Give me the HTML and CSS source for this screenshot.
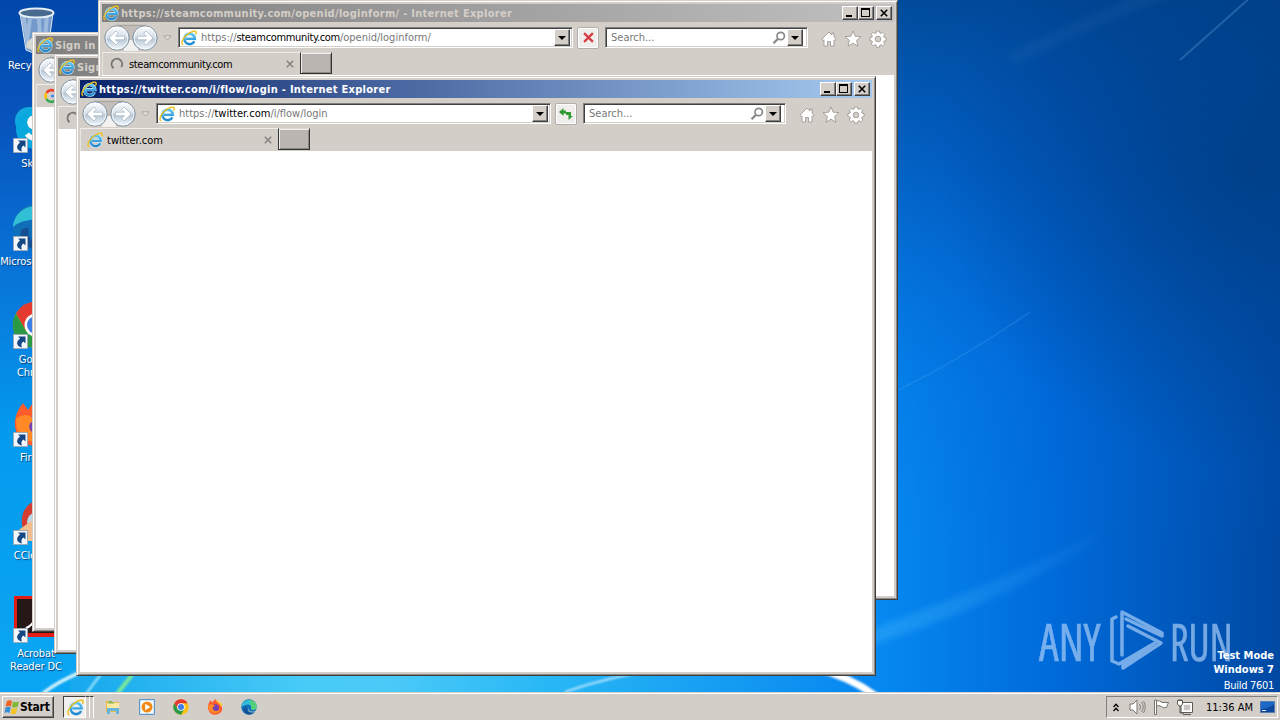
FILE: index.html
```html
<!DOCTYPE html>
<html lang="en">
<head>
  <meta charset="UTF-8">
  <title>Desktop</title>
  <link rel="stylesheet" href="styles.css">
</head>
<body>
  <svg class="sprites" width="0" height="0">
    <defs>
      <linearGradient id="glass" x1="0" y1="0" x2="0" y2="1">
        <stop offset="0" stop-color="#fff"/><stop offset=".45" stop-color="#d6dfe8"/><stop offset=".55" stop-color="#b9c8d6"/><stop offset="1" stop-color="#f4fbff"/>
      </linearGradient>
      <linearGradient id="ieBlue" x1="0" y1="0" x2="0" y2="1">
        <stop offset="0" stop-color="#5cc3f2"/><stop offset="1" stop-color="#1f86cf"/>
      </linearGradient>
    </defs>
    <symbol id="ie" viewBox="0 0 16 16">
      <path d="M13.400 11.200A5.300 5.300 0 1 1 13.900 8.700H4.500" fill="none" stroke="#d3effc" stroke-width="3.200"/>
      <path d="M13.300 11.200A5.200 5.200 0 1 1 13.800 8.800H5" fill="none" stroke="url(#ieBlue)" stroke-width="2.300"/>
      <path d="M2.200 14.800C-.8 13.800 1.800 8 6.200 4.500 10.600 1 15.200 0 15.200 2.400c0 .8-.3 1.500-.7 2.200" fill="none" stroke="#edc021" stroke-width="1.400"/>
    </symbol>
    <symbol id="nav" viewBox="0 0 56 28">
      <path d="M13 1.500H43" stroke="#aaa5a0" stroke-width="1.500"/>
      <path d="M13 2H43V26H13Z" fill="#c3beb9"/>
      <path d="M21 20Q28 12 35 20V27H21Z" fill="#f3f1ef"/>
      <circle cx="14" cy="14" r="12.200" fill="url(#glass)" stroke="#8294a5"/>
      <circle cx="42" cy="14" r="12.200" fill="url(#glass)" stroke="#8294a5"/>
      <circle cx="14" cy="14" r="10.800" fill="none" stroke="#fff" stroke-opacity=".7"/>
      <circle cx="42" cy="14" r="10.800" fill="none" stroke="#fff" stroke-opacity=".7"/>
      <path d="M6 14l7-7 2.300 2.300-2.800 2.900H21.500v3.600h-9l2.800 2.900L13 21z" fill="#fff" stroke="#a3b3c2" stroke-width=".7"/>
      <path d="M50 14l-7-7-2.300 2.300 2.800 2.900H34.500v3.600h9l-2.800 2.900L43 21z" fill="#fff" stroke="#a3b3c2" stroke-width=".7"/>
    </symbol>
    <symbol id="menu-arrow" viewBox="0 0 9 6"><path d="M.8.8h7.400L4.500 5z" fill="#e5e1dc" stroke="#aaa6a1"/></symbol>
    <symbol id="down" viewBox="0 0 8 4"><path d="M0 0h8L4 4z"/></symbol>
    <symbol id="lens" viewBox="0 0 14 14"><circle cx="8.700" cy="5" r="3.700" fill="none" stroke="#888" stroke-width="1.700"/><path d="M6 7.700L1.500 12.200" stroke="#888" stroke-width="2.300"/></symbol>
    <symbol id="home" viewBox="0 0 16 16"><path d="M8 1L.8 8.200l1.400 1.300.8-.6V15h3.500v-4.500h3V15H13V8.900l.8.600 1.400-1.300L13 6V2h-2v2z" fill="#fff" stroke="#9e9994" stroke-width=".9"/></symbol>
    <symbol id="star" viewBox="0 0 18 18"><path d="M9 .9l2.200 5.300 5.800.4-4.400 3.800 1.400 5.900L9 13.100l-5 3.200 1.400-5.900L1 6.600l5.800-.4z" fill="#fff" stroke="#9e9994" stroke-width=".9"/></symbol>
    <symbol id="gear" viewBox="0 0 18 18">
      <g fill="#fff" stroke="#9e9994" stroke-width=".9"><path d="M7.500 1h3l.4 2 1.200.5 1.700-1.200 2 2-1.200 1.700.5 1.200 2 .4v3l-2 .4-.5 1.200 1.200 1.700-2 2-1.700-1.200-1.200.5-.4 2h-3l-.4-2-1.200-.5-1.700 1.200-2-2 1.200-1.700-.5-1.200-2-.4v-3l2-.4.5-1.200-1.200-1.700 2-2 1.700 1.200 1.200-.5z"/><circle cx="9" cy="9" r="2.800" fill="#d4cec8"/></g>
    </symbol>
    <symbol id="x" viewBox="0 0 8 8"><path d="M.8.8l6.400 6.400M7.200.8L.8 7.200" stroke="currentColor" stroke-width="1.600"/></symbol>
    <symbol id="spin" viewBox="0 0 14 14"><path d="M3.500 11.200A5.300 5.300 0 1 1 11.300 10" fill="none" stroke="#777" stroke-width="2"/></symbol>
    <symbol id="shortcut" viewBox="0 0 15 15"><path d="M.5.5h14v14H.5z" fill="#f3f7fb" stroke="#9cabb9"/><path d="M5 2.500H12.500V9.500L10.500 7.500C8 9 8 11 9 13.500 4 12.500 2 8.500 7 4.600z" fill="#164785"/></symbol>
    <symbol id="chrome" viewBox="0 0 48 48"><circle cx="24" cy="24" r="23" fill="#fbc116"/><path d="M4 12.500A23 23 0 0 1 44 12.500H24L14 30z" fill="#e53a2f"/><path d="M4 12.500A23 23 0 0 0 24 47L34 30 14 30z" fill="#2a9a45"/><circle cx="24" cy="24" r="11.500" fill="#fff"/><circle cx="24" cy="24" r="9" fill="#3e7de8"/></symbol>
    <symbol id="edge" viewBox="0 0 48 48"><circle cx="24" cy="24" r="23" fill="#0f6fb9"/><path d="M1 24C2 5 25-4 40 9c8 7 10 20 1 23-6 2-13 0-11-4 3-7-4-12-12-11C10 18 4 21 1 24z" fill="#31bfd6"/><path d="M29 3c16 3 23 20 15 27-5 4-15 2-14-2 2-10-5-14-3-25z" fill="#54d079"/><path d="M17 25c-3 11 7 20 23 15-9 10-25 8-31-4-2-8 1-12 8-11z" fill="#174f94"/><path d="M24 28c-4 6 5 14 20 7 4-2-1 5-4 5-17 4-23-9-16-12z" fill="#d4cec8" fill-opacity=".75"/></symbol>
    <symbol id="firefox" viewBox="0 0 48 48"><path d="M4 17C6 10 9 7 11 4l5 7c3-6 7-8 11-10 1 7 8 9 13 14 13 15 2 32-15 32C10 48-1 32 4 17z" fill="#ff5b2d"/><path d="M27 2c0 10 14 10 15 23l4-8C44 9 33 8 27 2z" fill="#ffca35"/><circle cx="25" cy="27" r="11" fill="#7541b3"/><path d="M4 20c9-8 17-2 20 2-6 0-9 5-5 10 6 7 17 4 20-4 2 17-26 22-34 2-1-4-1-7-1-10z" fill="#ff8925"/></symbol>
  </svg>

  <div class="desktop">
    <svg class="wallpaper" viewBox="0 0 1280 692" preserveAspectRatio="none">
      <defs>
        <linearGradient id="base" x1="0" y1="0" x2="1" y2="0">
          <stop offset="0" stop-color="#0a9cf2"/><stop offset=".69" stop-color="#0688f0"/><stop offset=".82" stop-color="#006bdb"/><stop offset="1" stop-color="#0049a3"/>
        </linearGradient>
        <linearGradient id="topShade" x1="0" y1="0" x2="0" y2="1">
          <stop offset="0" stop-color="#00418c" stop-opacity=".85"/><stop offset=".25" stop-color="#0049a8" stop-opacity=".58"/><stop offset=".56" stop-color="#0059c8" stop-opacity=".14"/><stop offset=".8" stop-color="#006bd8" stop-opacity="0"/>
        </linearGradient>
        <linearGradient id="leftShade" x1="0" y1="0" x2="0" y2="1">
          <stop offset="0" stop-color="#0048aa"/><stop offset=".18" stop-color="#0755bd"/><stop offset=".4" stop-color="#0875d9"/><stop offset=".63" stop-color="#039bee"/><stop offset="1" stop-color="#0ba6f3"/>
        </linearGradient>
        <radialGradient id="corner"><stop offset="0" stop-color="#003c7c" stop-opacity=".7"/><stop offset="1" stop-color="#003c7c" stop-opacity="0"/></radialGradient>
        <linearGradient id="glow" x1="0" y1="0" x2="1" y2="0"><stop offset="0" stop-color="#16a8ed"/><stop offset=".3" stop-color="#48cbf7"/><stop offset=".4" stop-color="#4bcaf8"/><stop offset=".6" stop-color="#29b8f5"/><stop offset="1" stop-color="#0688f0"/></linearGradient>
        <linearGradient id="ray" x1="0" y1="0" x2="1" y2="0"><stop offset="0" stop-color="#4bbcff" stop-opacity=".35"/><stop offset="1" stop-color="#4bbcff" stop-opacity="0"/></linearGradient>
        <filter id="soft"><feGaussianBlur stdDeviation="1.200"/></filter>
        <filter id="softer"><feGaussianBlur stdDeviation="3"/></filter>
      </defs>
      <rect width="1280" height="692" fill="url(#base)"/>
      <rect width="1280" height="692" fill="url(#topShade)"/>
      <ellipse cx="1250" cy="170" rx="310" ry="300" fill="url(#corner)"/>
      <rect width="120" height="692" fill="url(#leftShade)"/>
      <rect x="70" y="670" width="790" height="22" fill="url(#glow)"/>
      <path d="M870 645Q1030 595 1130 515Q1020 575 870 630z" fill="url(#ray)" filter="url(#softer)"/>
      <path d="M898 390Q960 360 1030 312" fill="none" stroke="#4ba7f1" stroke-opacity=".28" stroke-width="1.500"/>
      <path d="M1180 60L1252 -4" stroke="#5794cb" stroke-opacity=".4" stroke-width="2"/>
      <path d="M1010 60Q1080 25 1170-10" fill="none" stroke="#4f91cc" stroke-opacity=".09" stroke-width="14" filter="url(#softer)"/>
      <g filter="url(#soft)" fill="none">
        <path d="M42 694Q60 680 84 671" stroke="#e5faff" stroke-width="3"/>
        <path d="M86 694L101 674" stroke="#b5eeff" stroke-width="2"/>
        <path d="M117 694L132 675" stroke="#7deb98" stroke-width="4"/>
        <path d="M565 692Q610 676 660 670" stroke="#b5e6ff" stroke-width="2"/>
        <path d="M815 668Q850 677 876 696" stroke="#fff" stroke-width="7"/>
      </g>
    </svg>

    <div class="icons">
      <div class="shortcut">
        <svg class="picture" viewBox="0 0 48 48"><path d="M8 6h33l-5 37q-11 6-22 0z" fill="#b1c5da" fill-opacity=".65" stroke="#dce8f1"/><path d="M11 8l6 34M35 8l-3 35M18 12l-3 22M27 12l1 20" stroke="#eef5fc" stroke-opacity=".35" stroke-width="4"/><ellipse cx="24.500" cy="6" rx="17" ry="4.500" fill="#476a8e" stroke="#e6eff7" stroke-width="2"/><path d="M15 35l6-5 6 3 6-2v10l-12 3-7-4z" fill="#d8d9d2"/></svg>
        <span>Recycle Bin</span>
      </div>
      <div class="shortcut">
        <svg class="picture" viewBox="0 0 48 48"><circle cx="17" cy="16" r="14" fill="#13a9de"/><circle cx="24" cy="24" r="20" fill="#09a9df"/><path d="M31 15c-7-5-15-2-13 4 1 5 13 3 13 9 0 7-12 7-16 1" fill="none" stroke="#fff" stroke-width="5"/></svg>
        <svg class="badge"><use href="#shortcut"/></svg><span>Skype</span>
      </div>
      <div class="shortcut">
        <svg class="picture"><use href="#edge"/></svg><svg class="badge"><use href="#shortcut"/></svg><span>Microsoft Edge</span>
      </div>
      <div class="shortcut">
        <svg class="picture"><use href="#chrome"/></svg><svg class="badge"><use href="#shortcut"/></svg><span>Google<br>Chrome</span>
      </div>
      <div class="shortcut">
        <svg class="picture"><use href="#firefox"/></svg><svg class="badge"><use href="#shortcut"/></svg><span>Firefox</span>
      </div>
      <div class="shortcut">
        <svg class="picture" viewBox="0 0 48 48"><path d="M10 27A18 20 0 0 1 39 8v31H12z" fill="#d43c31"/><circle cx="25" cy="25" r="10" fill="#b9d8e8"/><path d="M4 35l15-11 8 8-2 12H7z" fill="#f1bd8d"/></svg>
        <svg class="badge"><use href="#shortcut"/></svg><span>CCleaner</span>
      </div>
      <div class="shortcut">
        <svg class="picture" viewBox="0 0 48 48"><path d="M2 1h44v41H2z" fill="#e51c14"/><path d="M5 4h38v34H5z" fill="#251817"/><path d="M14 33c9-3 13-17 10-20s-4 4 1 11 12 5 11 3-12-1-22 6z" fill="none" stroke="#fff" stroke-width="2"/></svg>
        <svg class="badge"><use href="#shortcut"/></svg><span>Acrobat<br>Reader DC</span>
      </div>
    </div>

    <div class="anyrun">
      <b>ANY</b>
      <svg viewBox="0 0 56 64"><g fill="none" stroke="currentColor" stroke-width="3.500" stroke-linejoin="round" stroke-linecap="round"><path d="M7 8L3 10V52L10 55 46 34"/><path d="M13 46V3L53 24V27L17 10"/><path d="M19 17L52 34 14 59V55L41 37"/></g></svg>
      <b class="run">RUN</b>
    </div>
    <div class="build"><b>Test Mode</b><b>Windows 7</b><span>Build 7601</span></div>

    <div class="window win-google">
      <div class="title"><svg class="ie"><use href="#ie"/></svg><span>Sign in - Google</span></div>
      <div class="toolbar"><svg class="nav"><use href="#nav"/></svg></div>
      <div class="tabs"><div class="tab"><svg class="tab-icon" viewBox="0 0 16 16"><g fill="none" stroke-width="2.600"><path d="M12.500 4A5.500 5.500 0 0 0 3.500 5" stroke="#ea4335"/><path d="M3.500 5a5.500 5.500 0 0 0 0 6" stroke="#fbbc05"/><path d="M3.500 11a5.500 5.500 0 0 0 8.500 1.500" stroke="#34a853"/><path d="M12 12.500A5 5 0 0 0 13.500 8H8" stroke="#4285f4"/></g></svg></div></div>
      <div class="page"></div>
    </div>

    <div class="window win-sign">
      <div class="title"><svg class="ie"><use href="#ie"/></svg><span>Sign in</span></div>
      <div class="toolbar"><svg class="nav"><use href="#nav"/></svg></div>
      <div class="tabs"><div class="tab"><svg class="tab-icon spin"><use href="#spin"/></svg></div></div>
      <div class="page"></div>
    </div>

    <div class="window win-steam">
      <div class="title">
        <svg class="ie"><use href="#ie"/></svg><span>https://steamcommunity.com/openid/loginform/ - Internet Explorer</span>
        <div class="controls"><i class="min"></i><i class="max"></i><i class="close"><svg><use href="#x"/></svg></i></div>
      </div>
      <div class="toolbar">
        <svg class="nav"><use href="#nav"/></svg><svg class="history"><use href="#menu-arrow"/></svg>
        <div class="field address"><svg class="ie"><use href="#ie"/></svg><span>https://<em>steamcommunity.com</em>/openid/loginform/</span><i class="drop"><svg><use href="#down"/></svg></i></div>
        <div class="reload stop"><svg><use href="#x"/></svg></div>
        <div class="field search"><span>Search...</span><svg class="lens"><use href="#lens"/></svg><i class="drop"><svg><use href="#down"/></svg></i></div>
        <div class="tools"><svg><use href="#home"/></svg><svg><use href="#star"/></svg><svg><use href="#gear"/></svg></div>
      </div>
      <div class="tabs"><div class="tab"><svg class="tab-icon spin"><use href="#spin"/></svg><span>steamcommunity.com</span><svg class="tab-close"><use href="#x"/></svg></div><div class="new-tab"></div></div>
      <div class="page"></div>
    </div>

    <div class="window win-twitter active">
      <div class="title">
        <svg class="ie"><use href="#ie"/></svg><span>https://twitter.com/i/flow/login - Internet Explorer</span>
        <div class="controls"><i class="min"></i><i class="max"></i><i class="close"><svg><use href="#x"/></svg></i></div>
      </div>
      <div class="toolbar">
        <svg class="nav"><use href="#nav"/></svg><svg class="history"><use href="#menu-arrow"/></svg>
        <div class="field address"><svg class="ie"><use href="#ie"/></svg><span>https://<em>twitter.com</em>/i/flow/login</span><i class="drop"><svg><use href="#down"/></svg></i></div>
        <div class="reload"><svg viewBox="0 0 14 12"><path d="M4.500 0L0 4l4.500 4V5.500H7v-3H4.500zM9.500 12L14 8H12V4H7v3h2.500z" fill="#2e9b32"/></svg></div>
        <div class="field search"><span>Search...</span><svg class="lens"><use href="#lens"/></svg><i class="drop"><svg><use href="#down"/></svg></i></div>
        <div class="tools"><svg><use href="#home"/></svg><svg><use href="#star"/></svg><svg><use href="#gear"/></svg></div>
      </div>
      <div class="tabs"><div class="tab"><svg class="tab-icon"><use href="#ie"/></svg><span>twitter.com</span><svg class="tab-close"><use href="#x"/></svg></div><div class="new-tab"></div></div>
      <div class="page"></div>
    </div>
  </div>

  <div class="taskbar">
    <div class="start">
      <svg viewBox="0 0 16 16"><path d="M3 2q3-1.500 5 0L7 7.500q-2-1-5.500 0z" fill="#ee6425"/><path d="M9 2.500q3 1.500 6 0L13.500 8q-3 1-5.500 0z" fill="#80b735"/><path d="M1.500 8.500q3-1.500 5.300 0L5.500 14q-2.500-1.500-5 0z" fill="#3790d7"/><path d="M7.800 9q2.500 1.200 5.500 0L12 14.500q-2.500 1.500-5.500 0z" fill="#f3c326"/></svg>
      <b>Start</b>
    </div>
    <div class="running"><div><svg><use href="#ie"/></svg></div><i></i><i></i></div>
    <div class="pinned">
      <svg viewBox="0 0 16 16"><path d="M1 2h5l1 1h7v10H1z" fill="#e9bd4b"/><path d="M2 4h12v6H2z" fill="#fbe9a2"/><path d="M3 4h6M4 2.500h3" stroke="#6db45a"/><path d="M2 9h12v6h-3v-3H5v3H2z" fill="#65b5dd"/></svg>
      <svg viewBox="0 0 16 16"><path d="M.5.500h15v15H.5z" fill="#cce4f6" stroke="#5e98c6"/><path d="M2 2h12v12H2z" fill="#fff"/><circle cx="8" cy="8" r="5.500" fill="#f28a16"/><path d="M6.200 4.800v6.400L11.300 8z" fill="#fff"/></svg>
      <svg><use href="#chrome"/></svg>
      <svg><use href="#firefox"/></svg>
      <svg><use href="#edge"/></svg>
    </div>
    <div class="tray">
      <svg class="more" viewBox="0 0 6 9"><path d="M.5 4L3 1.300 5.500 4M.5 8L3 5.300 5.500 8" fill="none" stroke="#000" stroke-width="1.300"/></svg>
      <svg class="volume" viewBox="0 0 17 16"><path d="M1 5h3l4-4v14l-4-4H1z" fill="#fff" stroke="#77736f"/><path d="M10.500 5q2 3 0 6M12.500 3q3.500 5 0 10M14.500 2q3.500 6 0 12" fill="none" stroke="#84807b"/></svg>
      <svg class="flag" viewBox="0 0 17 16"><path d="M1.500 1h2v14.500h-2z" fill="#fff" stroke="#77736f"/><path d="M3.500 2Q7 1 9 3.500h6.500l-2 5q-3 1-5-1-2-1.500-5-.5z" fill="#fff" stroke="#77736f"/></svg>
      <svg class="net" viewBox="0 0 16 16"><path d="M5.500 4.500h9v8h-9z" fill="#c9c5c1" stroke="#fff" stroke-width="2.500"/><path d="M4 3.500h11.500v10H4zM6 15.500h8M3 7v7h4" fill="none" stroke="#5c5955"/><path d="M.5 1.500h5V5L4 7H2L.5 5z" fill="#fff" stroke="#5c5955"/><path d="M2 0v2M4 0v2" stroke="#5c5955"/></svg>
      <span>11:36 AM</span>
      <svg class="show" viewBox="0 0 15 13"><path d="M.5.500h14v11H.5z" fill="#1b68c9" stroke="#557eae"/><path d="M1 8Q8 8 14 3v8H1z" fill="#0b489d"/><path d="M2 9.500h4" stroke="#eee"/></svg>
    </div>
  </div>
</body>
</html>
```
FILE: styles.css
```css
* {
  box-sizing: border-box;
}
body {
  margin: 0;
  width: 1280px;
  height: 720px;
  overflow: hidden;
  display: flex;
  flex-direction: column;
  font-family: "DejaVu Sans Condensed", "DejaVu Sans", sans-serif;
  font-size: 11px;
  line-height: 13px;
  white-space: nowrap;
}
svg {
  display: block;
  flex: none;
}
.sprites {
  position: absolute;
}
.desktop {
  position: relative;
  height: 692px;
  overflow: hidden;
}
.wallpaper {
  position: absolute;
  width: 1280px;
  height: 692px;
}

/* desktop shortcuts */
.icons {
  position: absolute;
  top: 7px;
  left: -2px;
  width: 76px;
}
.shortcut {
  position: relative;
  height: 98px;
  display: flex;
  flex-direction: column;
  align-items: center;
  gap: 4px;
  color: white;
  text-align: center;
  text-shadow: 1px 1px 1px #063a76;
  letter-spacing: -0.1px;
}
.picture {
  width: 48px;
  height: 48px;
}
.badge {
  position: absolute;
  left: 15px;
  top: 33px;
  width: 15px;
  height: 15px;
}

/* windows */
.window {
  position: absolute;
  width: 800px;
  height: 600px;
  padding: 3px;
  background: #d4cec8;
  border: 1px solid #d4cec8;
  border-right-color: #404040;
  border-bottom-color: #404040;
  box-shadow: inset 1px 1px #fff, inset -1px -1px #8b8782;
}
.win-google { left: 32px; top: 32px; }
.win-sign { left: 54px; top: 54px; }
.win-steam { left: 98px; top: 0; }
.win-twitter { left: 76px; top: 76px; }
.title {
  height: 18px;
  display: flex;
  align-items: center;
  padding: 0 2px 0 1px;
  gap: 2px;
  color: #d4cec8;
  background: linear-gradient(90deg, #808080, #c0c0c0);
  font-weight: bold;
  letter-spacing: 0.29px;
}
.active .title {
  color: white;
  background: linear-gradient(90deg, #0a246a, #a6caf0);
}
.ie {
  width: 16px;
  height: 16px;
}
.controls {
  display: flex;
  margin-left: auto;
}
.controls i {
  width: 16px;
  height: 14px;
  background: #d4cec8;
  border: 1px solid #fff;
  border-right-color: #404040;
  border-bottom-color: #404040;
  box-shadow: inset -1px -1px #808080;
  color: #000;
}
.min::after {
  content: "";
  display: block;
  width: 6px;
  height: 2px;
  margin: 8px 0 0 3px;
  background: #000;
}
.max::after {
  content: "";
  display: block;
  width: 7px;
  height: 6px;
  margin: 1px 0 0 2px;
  border: 1px solid #000;
  border-top-width: 2px;
}
.controls .close {
  margin-left: 2px;
}
.close svg {
  width: 8px;
  height: 8px;
  margin: 2px 0 0 3px;
}
.toolbar {
  height: 30px;
  display: flex;
  align-items: center;
  padding: 1px 0 0 1px;
}
.nav {
  width: 56px;
  height: 28px;
}
.history {
  width: 9px;
  height: 6px;
  margin: 0 6px 0 4px;
}
.field {
  height: 21px;
  display: flex;
  align-items: center;
  background: #fff;
  border: 1px solid #808080;
  border-right-color: #fff;
  border-bottom-color: #fff;
  box-shadow: inset 1px 1px #404040, inset -1px -1px #d4cec8;
  color: #777;
}
.field em {
  color: #000;
  font-style: normal;
}
.win-steam em,
.win-steam .tab span {
  letter-spacing: -0.33px;
}
.address {
  width: 395px;
  padding: 0 2px;
  gap: 4px;
}
.drop {
  width: 16px;
  height: 17px;
  margin-left: auto;
  display: flex;
  align-items: center;
  justify-content: center;
  background: #d4cec8;
  border: 1px solid #fff;
  border-right-color: #404040;
  border-bottom-color: #404040;
  box-shadow: inset -1px -1px #808080;
}
.drop svg {
  width: 8px;
  height: 4px;
}
.reload {
  width: 22px;
  height: 22px;
  margin: 0 6px 0 4px;
  display: flex;
  align-items: center;
  justify-content: center;
  background: #f0eeec;
  border: 1px solid #b4afab;
  border-radius: 2px;
  box-shadow: inset 0 0 0 1px #fff;
}
.reload svg {
  width: 14px;
  height: 12px;
}
.stop svg {
  width: 11px;
  height: 11px;
  color: #d43c40;
}
.search {
  width: 203px;
  padding: 0 4px 0 5px;
}
.lens {
  width: 14px;
  height: 14px;
  margin-left: auto;
  margin-right: 1px;
}
.search .drop {
  margin-left: 0;
}
.tools {
  display: flex;
  align-items: center;
  gap: 7px;
  margin: 3px 0 0 13px;
}
.tools svg {
  width: 18px;
  height: 18px;
}
.tools svg:first-child {
  width: 16px;
  height: 16px;
}
.tabs {
  height: 23px;
  display: flex;
}
.tab {
  width: 198px;
  display: flex;
  align-items: center;
  padding: 0 6px;
  border-top: 1px solid #f0edea;
  border-left: 1px solid #e8e5e1;
}
.tab span {
  margin-left: 4px;
}
.tab-icon {
  width: 16px;
  height: 16px;
}
.spin {
  width: 14px;
  height: 14px;
  margin: 0 1px;
}
.tab-close {
  width: 8px;
  height: 8px;
  margin-left: auto;
  color: #888480;
}
.new-tab {
  width: 32px;
  height: 22px;
  background: #bbb5b1;
  border: 1px solid #333;
  border-top-color: #ded9d5;
  border-right-width: 1px;
  box-shadow: inset 1px 1px #eee, inset -1px -1px #8b8782;
}
.page {
  height: 521px;
  background: #fff;
}

/* watermark */
.anyrun {
  position: absolute;
  left: 1039px;
  top: 609px;
  display: flex;
  align-items: center;
  color: #a9cdf7;
  opacity: 0.7;
}
.anyrun b {
  width: 62px;
  font: 51px/64px "Open Sans", sans-serif;
  font-stretch: condensed;
  transform: scaleX(0.87);
  transform-origin: left;
  -webkit-text-stroke: 0.6px currentColor;
}
.anyrun .run {
  transform: scaleX(0.8);
}
.anyrun svg {
  width: 56px;
  height: 64px;
  margin: 0 5px 0 8px;
}
.build {
  position: absolute;
  right: 6px;
  top: 649px;
  display: flex;
  flex-direction: column;
  text-align: right;
  color: #fff;
  line-height: 14px;
}
.build span {
  margin-top: 2px;
  letter-spacing: -0.3px;
}

/* taskbar */
.taskbar {
  height: 28px;
  display: flex;
  align-items: center;
  padding: 2px 2px 0;
  background: #d4cec8;
  box-shadow: inset 0 1px #d4cec8, inset 0 2px #fff;
}
.start {
  width: 52px;
  height: 22px;
  display: flex;
  align-items: center;
  padding-left: 1px;
  border: 1px solid #fff;
  border-right-color: #404040;
  border-bottom-color: #404040;
  box-shadow: inset -1px -1px #808080;
}
.start svg {
  width: 16px;
  height: 16px;
}
.start b {
  font-size: 12px;
  letter-spacing: -0.2px;
}
.running {
  display: flex;
  margin-left: 9px;
}
.running div {
  width: 23px;
  height: 22px;
  padding: 2px 3px;
  background: #f2f0ee;
  border: 1px solid #404040;
  border-right-color: #fff;
  border-bottom-color: #fff;
}
.running div svg {
  width: 17px;
  height: 17px;
}
.running i {
  width: 4px;
  border-right: 1px solid #fff;
  border-top: 1px solid #404040;
}
.pinned {
  display: flex;
  gap: 18px;
  margin-left: 11px;
}
.pinned svg {
  width: 16px;
  height: 16px;
}
.tray {
  width: 172px;
  height: 22px;
  margin-left: auto;
  display: flex;
  align-items: center;
  padding-left: 6px;
  border: 1px solid #808080;
  border-right-color: #fff;
  border-bottom-color: #fff;
}
.more { width: 6px; height: 9px; }
.volume { width: 17px; height: 16px; margin-left: 10px; }
.flag { width: 17px; height: 16px; margin-left: 7px; }
.net { width: 16px; height: 16px; margin-left: 7px; }
.tray span { margin-left: 13px; }
.show { width: 15px; height: 13px; margin-left: auto; margin-right: 2px; }
```
